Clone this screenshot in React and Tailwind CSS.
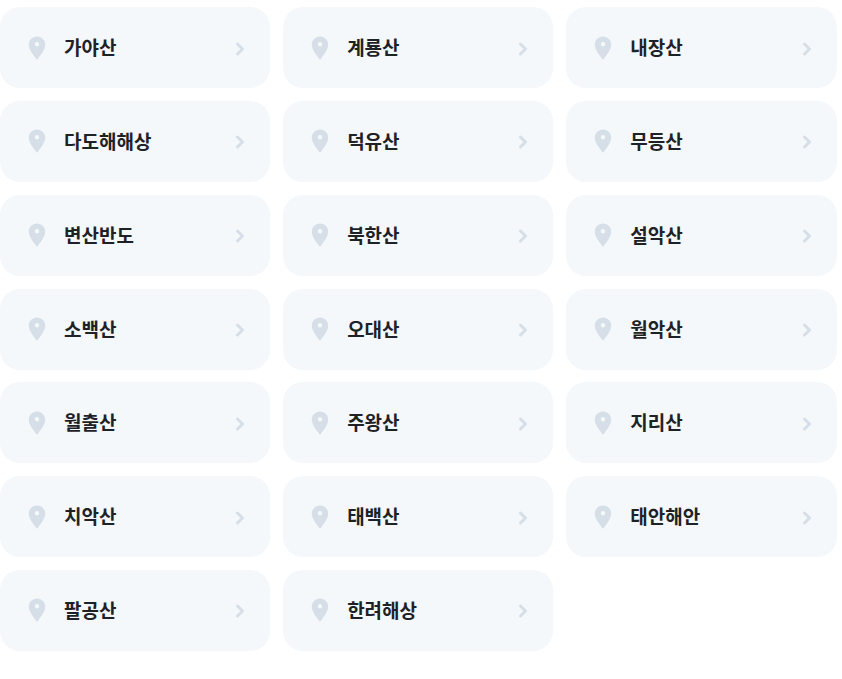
import { ChevronRight } from 'lucide-react';

const parks = [
  '가야산', '계룡산', '내장산',
  '다도해해상', '덕유산', '무등산',
  '변산반도', '북한산', '설악산',
  '소백산', '오대산', '월악산',
  '월출산', '주왕산', '지리산',
  '치악산', '태백산', '태안해안',
  '팔공산', '한려해상',
];

function PinIcon() {
  return (
    <svg width="18" height="24" viewBox="0 0 18 24" className="shrink-0">
      <path
        fillRule="evenodd"
        fill="#d6dee8"
        d="M9 .5C4.200.5.800 4.100.800 8.800c0 5 4.600 10 7.400 14.200.4.600 1.200.600 1.600 0 2.800-4.200 7.400-9.200 7.400-14.200C17.200 4.100 13.800.5 9 .5ZM9 6a2.200 2.200 0 1 1 0 4.400A2.200 2.200 0 0 1 9 6Z"
      />
    </svg>
  );
}

export default function App() {
  return (
    <div className="w-[842px] h-[679px] overflow-hidden bg-white pt-[7.2px] font-['Noto_Sans_CJK_KR','Noto_Sans',sans-serif]">
      <div className="grid w-[836.6px] grid-cols-3 gap-x-[12.8px] gap-y-[12.8px]">
        {parks.map((name) => (
          <div key={name} className="flex h-[81px] items-center rounded-[20px] bg-[#f4f8fb] pl-[28px] pr-[20px]">
            <PinIcon />
            <span className="ml-[18px] flex-1 text-[19px] font-semibold leading-none text-[#1e2226] -translate-y-px">{name}</span>
            <ChevronRight size={20} strokeWidth={3.6} className="text-[#d6dee8] translate-y-px" />
          </div>
        ))}
      </div>
    </div>
  );
}
